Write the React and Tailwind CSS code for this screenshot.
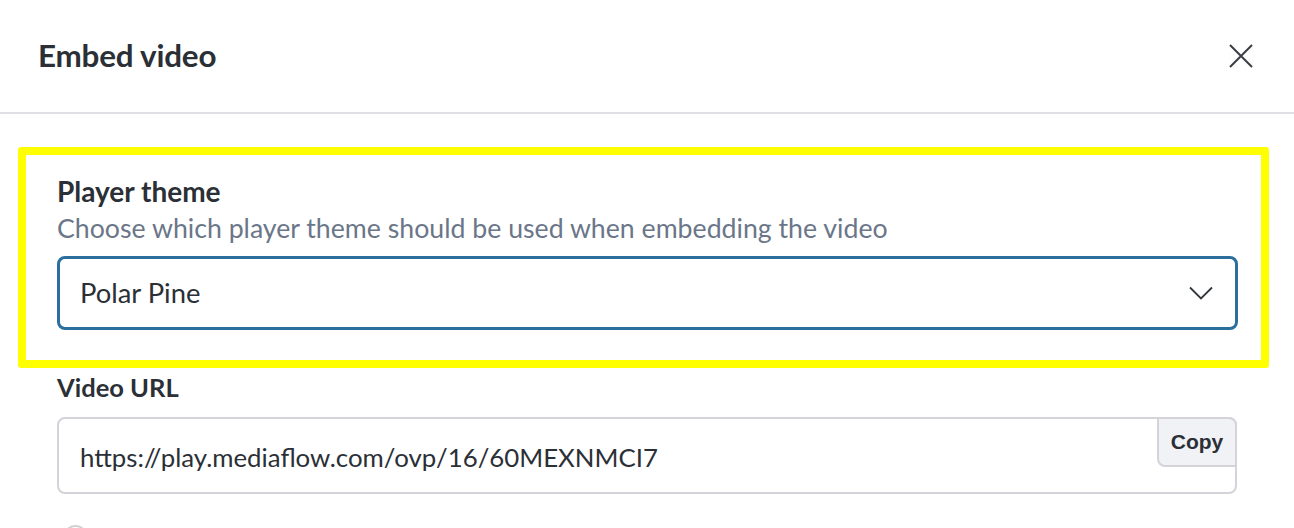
import React from "react";

function CloseIcon() {
  return (
    <svg width="24" height="24" viewBox="0 0 24 24" fill="none">
      <path d="M1 1L23 23M23 1L1 23" stroke="#3a3d44" strokeWidth="2" />
    </svg>
  );
}

function Chevron() {
  return (
    <svg width="24" height="14" viewBox="0 0 24 14" fill="none">
      <path d="M1 1.5L12 12.5L23 1.5" stroke="#33363c" strokeWidth="1.8" />
    </svg>
  );
}

export default function App() {
  return (
    <div className="w-[1294px] h-[528px] overflow-hidden bg-white text-[#2b2f36] font-['Lato',sans-serif]">
      {/* header */}
      <div className="h-[114px] flex items-center justify-between pl-[38px] pr-[41px] border-b-2 border-[#dfdfe6]">
        <h1 className="text-[31.4px] font-bold tracking-[-0.2px]">Embed video</h1>
        <button className="w-[24px] h-[24px] flex items-center justify-center">
          <CloseIcon />
        </button>
      </div>

      <div className="pt-[33px] pl-[18px]">
        {/* highlighted field */}
        <div className="w-[1251px] border-8 border-[#ffff00] rounded-[3px] pl-[31px] pr-[23px] pt-[18px] pb-[30px]">
          <div className="text-[28px] font-bold leading-[36px]">Player theme</div>
          <div className="mt-[2px] text-[26.7px] leading-[35px] text-[#6b7689]">
            Choose which player theme should be used when embedding the video
          </div>
          <div className="mt-[10px] h-[74px] border-[3px] border-[#2c6f9d] rounded-[8px] flex items-center justify-between pl-[20px] pr-[22px]">
            <span className="text-[27.4px]">Polar Pine</span>
            <Chevron />
          </div>
        </div>

        <div className="pl-[39px] pr-[57px]">
          <div className="mt-[1px] text-[25.5px] font-bold leading-[36px]">Video URL</div>
          <div className="relative mt-[12px] h-[77px] border-2 border-[#d3d3d9] rounded-[8px] flex items-center pl-[21px] pt-[3px]">
            <span className="text-[25.8px]">https://play.mediaflow.com/ovp/16/60MEXNMCI7</span>
            <button className="absolute -top-[2px] -right-[2px] w-[80px] h-[50px] bg-[#f1f2f6] border-2 border-[#d3d3d9] rounded-bl-[8px] rounded-tr-[8px] font-['Liberation_Sans',sans-serif] font-bold text-[21px]">
              Copy
            </button>
          </div>
          <div className="mt-[31px] ml-[6px] w-[25px] h-[25px] rounded-full border-2 border-[#cfcfd4]"></div>
        </div>
      </div>
    </div>
  );
}
